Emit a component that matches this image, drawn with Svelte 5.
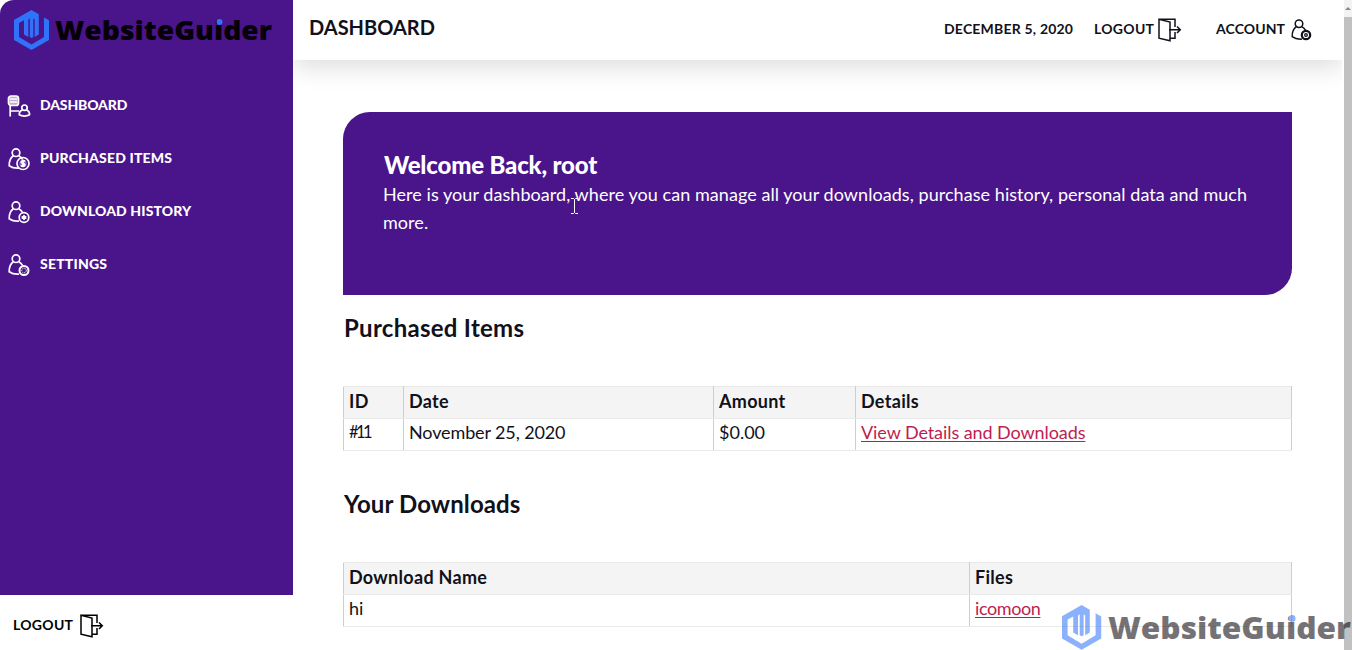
<script>
  const nav = [
    { label: 'DASHBOARD', icon: 'data' },
    { label: 'PURCHASED ITEMS', icon: 'coin' },
    { label: 'DOWNLOAD HISTORY', icon: 'down' },
    { label: 'SETTINGS', icon: 'gear' }
  ];
</script>

{#snippet logo()}
  <svg class="logo" viewBox="0 0 260 40" width="260" height="40">
    <path d="M17.500 0L24.800 4.200V24.500L20.700 27V10Q20.700 8.500 19.300 8.500V27L17.500 28L15.800 27V8.500Q14.300 8.500 14.300 10V27L10 24.500V10.300L5 13V27L17.500 34.500L30 27V7.400L35 10.300V30L17.500 40L0 30V10Z" fill="#2f73fb" />
    <text x="41" y="30" textLength="217" lengthAdjust="spacingAndGlyphs" class="brand">WebsiteGuider</text>
    <circle cx="205.500" cy="12" r="3" fill="#2f73fb" />
  </svg>
{/snippet}

{#snippet person(kind)}
  <svg class="icon" viewBox="0 0 24 24" width="24" height="24">
    {#if kind === 'data'}
      <rect x="1.500" y="2" width="10" height="9.500" rx="2.500" fill="currentColor" fill-opacity=".65" />
      <path d="M3 5h7M3 8h7M3.200 11v11.500M3.200 17h9" />
      <circle cx="17.500" cy="13.700" r="2.700" />
      <path d="M15.300 16c-2.200 1-3.300 2.800-3 4.800 2.600 1.700 7.600 1.700 10.200 0 .3-2-.8-3.800-3-4.800" />
    {:else}
      <circle cx="9" cy="5.700" r="3.800" />
      <path d="M6.300 8.700C3.200 11 2 14.500 2.200 18.700c2.500 1.900 6 2.700 9.800 2.400M11.700 8.700c1.800.9 3.100 2.300 4 4" />
      {#if kind === 'coin'}
        <circle cx="16" cy="16.500" r="6" />
        <circle cx="16" cy="16.500" r="3.800" fill="currentColor" fill-opacity=".35" stroke="none" />
        <path d="M18 14.500c-1-1.200-3.800-1-3.800.5s3.700 1.300 3.700 3-2.900 1.700-4 .4M16 13v7" />
      {:else if kind === 'down'}
        <circle cx="17" cy="17.500" r="4.800" />
        <path d="M17 15v5M15.500 16v3M18.500 16v3" />
      {:else if kind === 'gear'}
        <circle cx="17" cy="17.500" r="4.500" stroke-width="2" />
        <circle cx="17" cy="17.500" r="2.300" stroke-width="1" stroke-dasharray="1.200 .8" />
      {:else}
        <circle cx="16" cy="17" r="4.200" stroke-width="2.200" />
        <circle cx="16" cy="17" r="1.300" stroke-width="1.300" />
      {/if}
    {/if}
  </svg>
{/snippet}

{#snippet door()}
  <svg class="icon door" viewBox="0 0 24 24" width="24" height="24">
    <path d="M1 1.200L12 4V22.800L1 20.200ZM1 1.200H17V9M12 20.200H17V14M11 11.800H22M19 8.500L22.300 11.800L19 15" />
  </svg>
{/snippet}

<div class="screen">
  <div class="left">
    <aside>
      <div class="mark">{@render logo()}</div>
      <nav>
        {#each nav as n}
          <a href="#top" class={n.icon}>{@render person(n.icon)}<span>{n.label}</span></a>
        {/each}
      </nav>
    </aside>
    <div class="leave"><span class="out">LOGOUT</span>{@render door()}</div>
  </div>
  <div class="right">
    <header>
      <h1>DASHBOARD</h1>
      <span class="today">DECEMBER 5, 2020</span>
      <span class="out">LOGOUT</span>{@render door()}
      <span class="acct">ACCOUNT</span>{@render person('account')}
    </header>
    <main>
      <section class="hero">
        <h2>Welcome Back, root</h2>
        <p>Here is your dashboard, where you can manage all your downloads, purchase history, personal data and much<br />more.</p>
      </section>
      <h3 class="t1">Purchased Items</h3>
      <table>
        <colgroup><col style="width:60px" /><col style="width:310px" /><col style="width:142px" /><col /></colgroup>
        <thead><tr><th>ID</th><th>Date</th><th>Amount</th><th>Details</th></tr></thead>
        <tbody><tr><td class="order">#11</td><td class="date">November 25, 2020</td><td>$0.00</td><td><a class="view" href="#top">View Details and Downloads</a></td></tr></tbody>
      </table>
      <h3 class="t2">Your Downloads</h3>
      <table>
        <colgroup><col style="width:626px" /><col /></colgroup>
        <thead><tr><th>Download Name</th><th>Files</th></tr></thead>
        <tbody><tr><td>hi</td><td><a class="file" href="#top">icomoon</a></td></tr></tbody>
      </table>
    </main>
  </div>
  <div class="scroll"><div class="arrow"><i></i></div><div class="thumb"></div></div>
  <svg class="cursor" viewBox="0 0 9 16" width="9" height="16"><path d="M1 .5h2.500l1 1 1-1H8M4.500 1v14M1 15.500h2.500l1-1 1 1H8" /></svg>
  <div class="watermark">{@render logo()}</div>
</div>

<style>
  :global(body) { background: #fff; overflow: hidden; }
  .screen { position: relative; display: flex; width: 1352px; height: 650px; overflow: hidden; background: #fff; font-family: Lato, sans-serif; color: #11111b; }
  .left { width: 293px; flex: none; display: flex; flex-direction: column; }
  aside { height: 595px; flex: none; box-sizing: border-box; background: #4a148a; border-top-left-radius: 14px; color: #fff; padding: 10px 0 0 14px; }
  .mark { height: 84px; }
  .logo { display: block; overflow: visible; }
  .brand { font: 800 26px "Open Sans", sans-serif; fill: #050008; }
  nav { margin-left: -7px; }
  nav a { display: flex; align-items: center; gap: 9px; height: 24px; margin-bottom: 29px; color: #fff; text-decoration: none; font-size: 14px; font-weight: 900; }
  nav span { margin-top: -4px; white-space: nowrap; }
  .data span { letter-spacing: -.15px; }
  .coin span { letter-spacing: .18px; }
  .down span { letter-spacing: .12px; }
  .gear span { letter-spacing: .2px; }
  .icon { fill: none; stroke: currentColor; stroke-width: 1.5; flex: none; overflow: visible; }
  nav .icon { stroke-width: 1.7; }
  .leave { display: flex; align-items: center; height: 61px; flex: none; padding-left: 13px; color: #000; font-size: 14px; font-weight: 700; }
  .out { letter-spacing: .3px; }
  .leave .out { width: 67px; margin-top: -2px; }
  .right { width: 1049px; flex: none; }
  header { display: flex; align-items: center; height: 60px; background: #fff; box-shadow: 0 8px 24px rgba(0,0,0,.13); clip-path: inset(0 0 -40px 0); font-size: 14px; font-weight: 700; color: #11111b; white-space: nowrap; }
  h1 { font-size: 20px; font-weight: 700; margin: -6px 0 0 16px; width: 635px; }
  header span { margin-top: -3px; }
  header .today { width: 150px; letter-spacing: .2px; }
  header .out { width: 63px; margin-right: 1px; }
  header .acct { margin-left: 34px; width: 74px; letter-spacing: .1px; }
  main { padding: 52px 50px 0; }
  .hero { height: 183px; box-sizing: border-box; background: #4a148a; color: #fff; border-radius: 27px 0; padding: 37px 0 0 41px; }
  h2 { margin: 0; font-size: 24px; line-height: 32px; font-weight: 900; letter-spacing: -.18px; }
  .hero p { margin: -1px 0 0 -1px; font-size: 18px; line-height: 28px; letter-spacing: .055px; white-space: nowrap; }
  h3 { margin: 0 0 0 1px; font-size: 24px; line-height: 32px; font-weight: 700; letter-spacing: .28px; }
  .t1 { padding: 17px 0 42px; }
  .t2 { padding: 37px 0 42px; letter-spacing: .1px; }
  table { width: 949px; table-layout: fixed; border-collapse: collapse; font-size: 18px; }
  th, td { box-sizing: border-box; height: 32px; padding: 0 5px 3px; text-align: left; line-height: 23px; border: 1px solid #e9e9e9; border-left-color: #d2cec6; border-right-color: #d2cec6; white-space: nowrap; }
  th { background: #f4f4f4; letter-spacing: .3px; }
  td { padding-bottom: 4px; }
  .order { letter-spacing: -2.6px; font-size: 16.500px; }
  .date { letter-spacing: -.12px; }
  td a { color: #bd1e51; text-decoration-thickness: 1px; text-underline-offset: 2px; }
  .view { letter-spacing: -.08px; }
  .file { letter-spacing: -.4px; }
  .scroll { width: 8px; margin-left: 2px; }
  .arrow { height: 17px; background: #f3f3f3; display: flex; align-items: center; justify-content: center; }
  .arrow i { border: 3px solid transparent; border-top: 0; border-bottom-color: #888; }
  .thumb { height: 633px; background: #c1c1c1; }
  .cursor { position: absolute; left: 570px; top: 198px; fill: none; stroke: #fff; }
  .watermark { position: absolute; left: 1062px; top: 605px; opacity: .55; transform: scale(1.12); transform-origin: 0 0; }
</style>
